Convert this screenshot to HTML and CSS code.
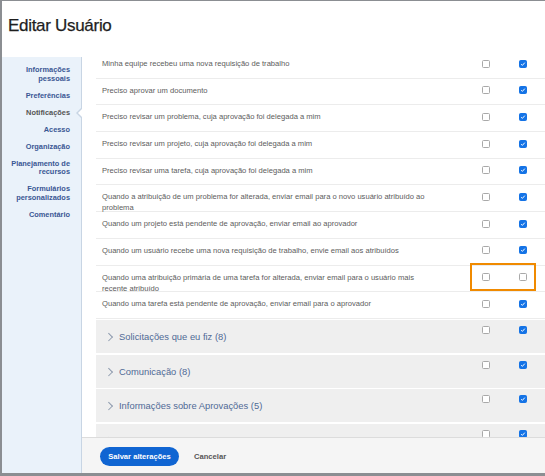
FILE: index.html
```html
<!DOCTYPE html>
<html lang="pt">
<head>
<meta charset="utf-8">
<title>Editar Usuário</title>
<link rel="stylesheet" href="styles.css">
</head>
<body>
<div class="modal">
  <header class="modal-header">
    <h1 class="title">Editar Usuário</h1>
  </header>
  <div class="modal-body">
    <nav class="sidebar">
      <a class="nav-item">Informações pessoais</a>
      <a class="nav-item">Preferências</a>
      <a class="nav-item active">Notificações</a>
      <a class="nav-item">Acesso</a>
      <a class="nav-item">Organização</a>
      <a class="nav-item">Planejamento de recursos</a>
      <a class="nav-item">Formulários personalizados</a>
      <a class="nav-item">Comentário</a>
    </nav>
    <main class="main">
      <div class="content">
        <div class="row"><span class="label">Minha equipe recebeu uma nova requisição de trabalho</span><span class="cell"><i class="cb"></i></span><span class="cell"><i class="cb on"></i></span></div>
        <div class="row"><span class="label">Preciso aprovar um documento</span><span class="cell"><i class="cb"></i></span><span class="cell"><i class="cb on"></i></span></div>
        <div class="row"><span class="label">Preciso revisar um problema, cuja aprovação foi delegada a mim</span><span class="cell"><i class="cb"></i></span><span class="cell"><i class="cb on"></i></span></div>
        <div class="row"><span class="label">Preciso revisar um projeto, cuja aprovação foi delegada a mim</span><span class="cell"><i class="cb"></i></span><span class="cell"><i class="cb on"></i></span></div>
        <div class="row"><span class="label">Preciso revisar uma tarefa, cuja aprovação foi delegada a mim</span><span class="cell"><i class="cb"></i></span><span class="cell"><i class="cb on"></i></span></div>
        <div class="row"><span class="label">Quando a atribuição de um problema for alterada, enviar email para o novo usuário atribuído ao problema</span><span class="cell"><i class="cb"></i></span><span class="cell"><i class="cb on"></i></span></div>
        <div class="row"><span class="label">Quando um projeto está pendente de aprovação, enviar email ao aprovador</span><span class="cell"><i class="cb"></i></span><span class="cell"><i class="cb on"></i></span></div>
        <div class="row"><span class="label">Quando um usuário recebe uma nova requisição de trabalho, envie email aos atribuídos</span><span class="cell"><i class="cb"></i></span><span class="cell"><i class="cb on"></i></span></div>
        <div class="row highlighted"><span class="label">Quando uma atribuição primária de uma tarefa for alterada, enviar email para o usuário mais recente atribuído</span><span class="cell"><i class="cb"></i></span><span class="cell"><i class="cb"></i></span><span class="callout"></span></div>
        <div class="row"><span class="label">Quando uma tarefa está pendente de aprovação, enviar email para o aprovador</span><span class="cell"><i class="cb"></i></span><span class="cell"><i class="cb on"></i></span></div>

        <div class="group"><span class="chev"></span><span class="group-label">Solicitações que eu fiz (8)</span><span class="cell"><i class="cb"></i></span><span class="cell"><i class="cb on"></i></span></div>
        <div class="group"><span class="chev"></span><span class="group-label">Comunicação (8)</span><span class="cell"><i class="cb"></i></span><span class="cell"><i class="cb on"></i></span></div>
        <div class="group"><span class="chev"></span><span class="group-label">Informações sobre Aprovações (5)</span><span class="cell"><i class="cb"></i></span><span class="cell"><i class="cb on"></i></span></div>
        <div class="group"><span class="chev"></span><span class="group-label">Informações sobre Trabalho atribuído a mim (7)</span><span class="cell"><i class="cb"></i></span><span class="cell"><i class="cb on"></i></span></div>
      </div>
      <footer class="footer">
        <button class="btn-primary">Salvar alterações</button>
        <button class="btn-link">Cancelar</button>
      </footer>
    </main>
  </div>
</div>
</body>
</html>
```

FILE: styles.css
```css
* { box-sizing: border-box; }
html, body { margin: 0; padding: 0; }
body {
  background: #8b8e92;
  width: 545px;
  height: 476px;
  overflow: hidden;
  font-family: "Liberation Sans", Arial, sans-serif;
}
.modal {
  margin: 1px 0 0 2px;
  width: 543px;
  height: 472px;
  background: #fff;
  display: flex;
  flex-direction: column;
}
.modal-header {
  height: 51px;
  flex: none;
  display: flex;
  align-items: center;
  padding-left: 6px;
}
.title {
  margin: 0;
  font-size: 17px;
  font-weight: normal;
  letter-spacing: -0.3px;
  color: #1e1e1e;
  -webkit-text-stroke: 0.25px #1e1e1e;
  padding-bottom: 2px;
}
.modal-body {
  flex: 1;
  display: flex;
  min-height: 0;
}
.sidebar {
  width: 80px;
  flex: none;
  margin-top: 5px;
  background: #eaf2fa;
  border-right: 1px solid #c8d5e4;
  padding: 9px 11px 0 4px;
  display: flex;
  flex-direction: column;
  align-items: flex-end;
  gap: 8.5px;
}
.nav-item {
  position: relative;
  display: block;
  text-align: right;
  font-size: 7.4px;
  line-height: 8.5px;
  font-weight: bold;
  color: #3a5794;
}
.nav-item.active { color: #555; }
.nav-item.active::before,
.nav-item.active::after {
  content: "";
  position: absolute;
  top: 50%;
  width: 0;
  height: 0;
  border-style: solid;
  transform: translateY(-50%);
}
.nav-item.active::before {
  right: -12px;
  border-width: 6px 6px 6px 0;
  border-color: transparent #c8d5e4 transparent transparent;
}
.nav-item.active::after {
  right: -12.5px;
  border-width: 5px 5px 5px 0;
  border-color: transparent #fff transparent transparent;
}
.main {
  flex: 1;
  display: flex;
  flex-direction: column;
  min-width: 0;
}
.content {
  flex: 1;
  overflow: hidden;
  padding-left: 14px;
  min-height: 0;
}
.row {
  position: relative;
  display: flex;
  align-items: flex-start;
  height: 26.7px;
  border-bottom: 1px solid #ececec;
  padding: 6px 4px 0 6px;
}
.label {
  flex: 1;
  font-size: 7.6px;
  line-height: 11px;
  color: #5c5c5c;
  padding-right: 32px;
}
.cell {
  width: 37px;
  flex: none;
  display: flex;
  justify-content: center;
  padding-top: 1.5px;
}
.cb {
  display: block;
  width: 8px;
  height: 8px;
  border: 1px solid #a9a9a9;
  border-radius: 1.5px;
  background: #fff;
}
.cb.on {
  border-color: #1473e6;
  background: #1473e6 url("data:image/svg+xml,%3Csvg xmlns='http://www.w3.org/2000/svg' viewBox='0 0 8 8'%3E%3Cpath d='M1.6 4.3 3.2 5.8 6.4 2.2' fill='none' stroke='%23fff' stroke-width='1.3'/%3E%3C/svg%3E") center/100% 100% no-repeat;
}
.callout {
  position: absolute;
  right: 9px;
  top: -3px;
  width: 66px;
  height: 28px;
  border: 2px solid #f08a00;
}
.group {
  display: flex;
  align-items: flex-start;
  height: 33px;
  margin-top: 1.5px;
  background: #efefef;
  padding: 6px 4px 0 9px;
}
.chev {
  width: 12px;
  flex: none;
  height: 8px;
  margin-top: 7px;
  position: relative;
}
.chev::before {
  content: "";
  position: absolute;
  left: 1px;
  top: 1px;
  width: 4.5px;
  height: 4.5px;
  border-top: 1px solid #8d9aae;
  border-right: 1px solid #8d9aae;
  transform: rotate(45deg);
}
.group-label {
  flex: 1;
  padding-left: 2px;
  margin-top: 5px;
  font-size: 9.4px;
  line-height: 12px;
  color: #4f6a96;
}
.group .cell { padding-top: 0; }
.footer {
  height: 36px;
  flex: none;
  background: #f5f5f5;
  border-top: 1px solid #dcdcdc;
  display: flex;
  align-items: center;
  padding-left: 18px;
  gap: 15px;
}
.btn-primary {
  height: 19px;
  width: 79px;
  border: 0;
  border-radius: 10px;
  background: #1065d2;
  color: #fff;
  font-family: "Liberation Sans", Arial, sans-serif;
  font-weight: bold;
  font-size: 7.6px;
  padding: 0;
  margin-top: 1px;
}
.btn-link {
  border: 0;
  background: none;
  padding: 0;
  font-family: "Liberation Sans", Arial, sans-serif;
  font-weight: bold;
  font-size: 7.6px;
  color: #555;
  margin-top: 1px;
}
```
